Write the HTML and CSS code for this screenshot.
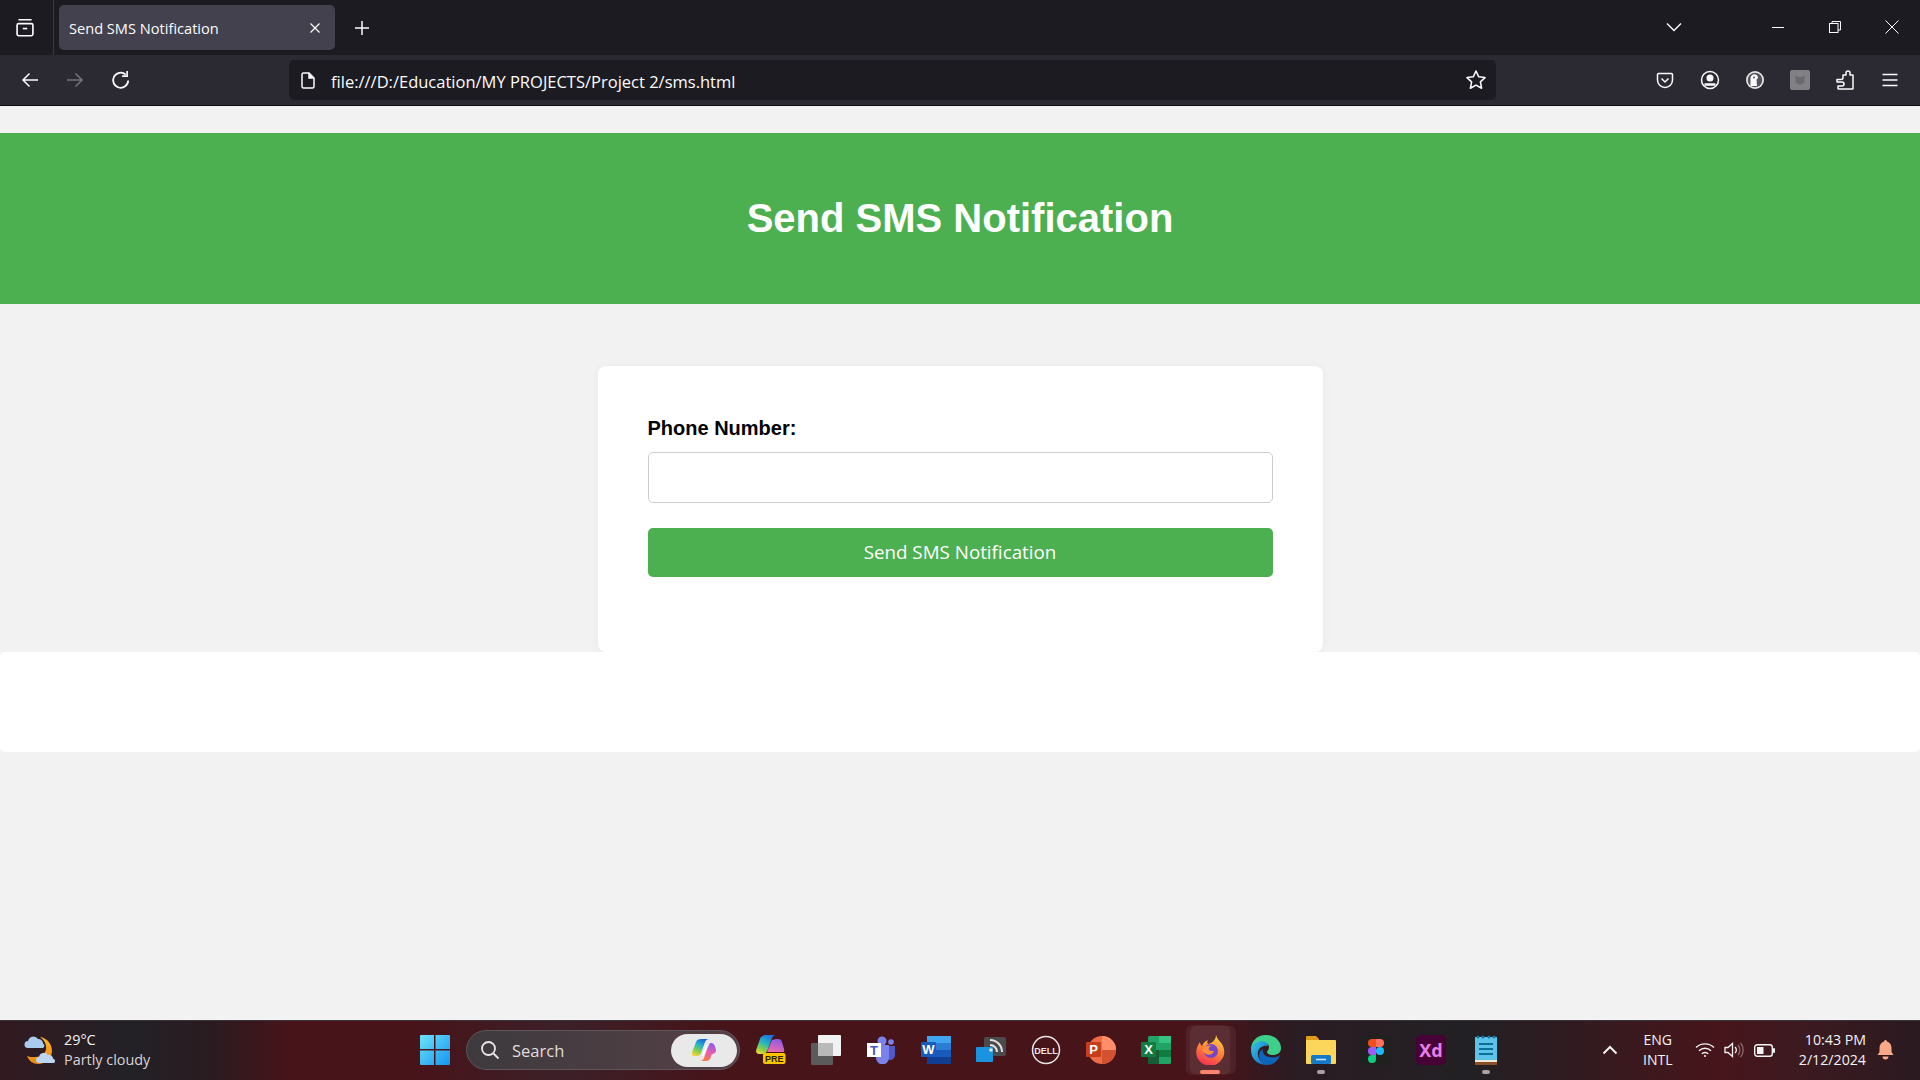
FILE: index.html
```html
<!doctype html>
<html>
<head>
  <title>Send SMS Notification</title>
  <link rel="stylesheet" href="styles.css">
</head>
<body>
  <div class="tabbar">
    <svg class="tab-list" width="22" height="22" viewBox="0 0 20 20" fill="none" stroke="#fbfbfe" stroke-width="1.5"><path d="M4 2.5h12M2.8 7.5A1.5 1.5 0 0 1 4.3 6h11.4a1.5 1.5 0 0 1 1.5 1.5v8a1.5 1.5 0 0 1-1.5 1.5H4.3a1.5 1.5 0 0 1-1.5-1.5z"/><path d="M8 10.5h4"/></svg>
    <div class="tab-sep"></div>
    <div class="tab">
      <span class="tab-title">Send SMS Notification</span>
      <svg width="12" height="12" viewBox="0 0 12 12" stroke="#fbfbfe" stroke-width="1.2"><path d="M1.5 1.5l9 9M10.5 1.5l-9 9"/></svg>
    </div>
    <svg class="new-tab" width="16" height="16" viewBox="0 0 16 16" stroke="#fbfbfe" stroke-width="1.5"><path d="M8 1v14M1 8h14"/></svg>
    <div class="tabbar-space"></div>
    <svg class="tab-menu" width="16" height="10" viewBox="0 0 16 10" fill="none" stroke="#fbfbfe" stroke-width="1.4"><path d="M1 1.5l7 7 7-7"/></svg>
    <div class="win-btn"><svg width="12" height="12" viewBox="0 0 12 12" stroke="#fbfbfe"><path d="M0 6.5h12"/></svg></div>
    <div class="win-btn"><svg width="12" height="12" viewBox="0 0 12 12" fill="none" stroke="#fbfbfe"><rect x="0.5" y="2.5" width="8.5" height="9"/><path d="M3 2.5V.5h8.5V9H9"/></svg></div>
    <div class="win-btn"><svg width="14" height="14" viewBox="0 0 14 14" stroke="#fbfbfe"><path d="M.5.5l13 13M13.5.5l-13 13"/></svg></div>
  </div>

  <div class="toolbar">
    <div class="nav-btns">
      <svg width="18" height="16" viewBox="0 0 18 16" fill="none" stroke="#fbfbfe" stroke-width="1.5"><path d="M17 8H2M8.5 1.5L2 8l6.5 6.5"/></svg>
      <svg width="18" height="16" viewBox="0 0 18 16" fill="none" stroke="#75747c" stroke-width="1.5"><path d="M1 8h15M9.5 1.5L16 8l-6.5 6.500"/></svg>
      <svg width="20" height="20" viewBox="0 0 18 18" fill="none" stroke="#fbfbfe" stroke-width="1.6"><path d="M15.5 9.5a6.800 6.800 0 1 1-2.300-5.400"/><path d="M14.500 1v4.500H10" stroke-width="1.5"/></svg>
    </div>
    <div class="urlbar">
      <svg width="14" height="17" viewBox="0 0 14 17" fill="none" stroke="#fbfbfe" stroke-width="1.5"><path d="M1 2.500A1.500 1.500 0 0 1 2.500 1h5.500L13 6v8.500a1.500 1.500 0 0 1-1.500 1.500h-9A1.500 1.500 0 0 1 1 14.500z"/><path d="M8 1v5h5" fill="#fbfbfe"/></svg>
      <span class="url">file:///D:/Education/MY PROJECTS/Project 2/sms.html</span>
      <svg width="22" height="22" viewBox="0 0 20 20" fill="none" stroke="#fbfbfe" stroke-width="1.4" stroke-linejoin="round"><path d="M10 1.800l2.500 5.300 5.700.7-4.200 3.900 1.100 5.800-5.100-2.900-5.100 2.900 1.100-5.800L1.800 7.800l5.700-.7z"/></svg>
    </div>
    <div class="tool-icons">
      <div class="tool-slot"><svg width="18" height="18" viewBox="0 0 18 18" fill="none" stroke="#fbfbfe" stroke-width="1.5"><path d="M2.500 2.500h13a1.500 1.500 0 0 1 1 1V9a7.500 7.500 0 0 1-15 0V3.500a1.500 1.500 0 0 1 1-1z"/><path d="M5.500 7.500L9 11l3.500-3.500"/></svg></div>
      <div class="tool-slot"><svg width="20" height="20" viewBox="0 0 20 20" fill="none" stroke="#fbfbfe" stroke-width="1.5"><circle cx="10" cy="10" r="8.500"/><circle cx="10" cy="8" r="2.800" fill="#fbfbfe"/><path d="M4.500 14.500h11" stroke-width="2.500"/></svg></div>
      <div class="tool-slot"><svg width="20" height="20" viewBox="0 0 20 20"><circle cx="10" cy="10" r="9" fill="#e8e8e8"/><circle cx="10" cy="10" r="7.300" fill="#55545c"/><path d="M5.500 16V8a4 4 0 0 1 5-3.500c2 .5 2.500 2 2.500 3.500l-1.500 1.500.5 6.500z" fill="#fbfbfe"/><circle cx="9" cy="7.500" r="1" fill="#55545c"/></svg></div>
      <div class="tool-slot"><svg width="20" height="20" viewBox="0 0 20 20"><rect width="20" height="20" rx="2" fill="#818085"/><path d="M5.500 5.500L10 7.500l4.500-2v7L10 15l-4.500-2.500z" fill="#6a696e"/></svg></div>
      <div class="tool-slot"><svg width="18" height="20" viewBox="0 0 18 20" fill="none" stroke="#fbfbfe" stroke-width="1.5" stroke-linejoin="round"><path d="M7 5h3V3a2 2 0 0 1 4 0v2h2.500a.5.5 0 0 1 .5.5v13a.5.5 0 0 1-.5.5h-14a.5.5 0 0 1-.5-.5V16h4a2 2 0 0 0 0-4H1V9.500h4a2 2 0 0 0 2-2z"/></svg></div>
      <div class="tool-slot"><svg width="16" height="14" viewBox="0 0 16 14" stroke="#fbfbfe" stroke-width="1.5"><path d="M.5 1.500h15M.5 7h15M.5 12.500h15"/></svg></div>
    </div>
  </div>

  <main class="page">
    <header class="page-head">
      <h1>Send SMS Notification</h1>
    </header>
    <form class="card">
      <label for="phone">Phone Number:</label>
      <input type="text" id="phone">
      <button type="button">Send SMS Notification</button>
    </form>
    <div class="strip"></div>
  </main>

  <footer class="taskbar">
    <div class="weather">
      <svg width="32" height="32" viewBox="0 0 32 32">
        <defs><linearGradient id="moon" x1="0" y1="0" x2="0" y2="1"><stop offset="0" stop-color="#fbb62e"/><stop offset="1" stop-color="#ee8612"/></linearGradient></defs>
        <path d="M16 3c7 1 12 7 12 14 0 7-6 13-14 13-5 0-9-3-11-8 2 1 5 1 8 1 8 0 12-5 11-11-.5-4-3-7-6-9z" fill="url(#moon)"/>
        <path d="M4 14a3.500 3.500 0 0 1 0-7 5.500 5.500 0 0 1 10-2 4.500 4.500 0 0 1 5 4.500 2.500 2.500 0 0 1 0 4.500z" fill="#a9cbee"/>
        <path d="M15 29a3 3 0 0 1 0-6 5 5 0 0 1 9-2 4 4 0 0 1 5 3.500 2.500 2.500 0 0 1 1 4.500z" fill="#bcd6f2"/>
      </svg>
      <div class="weather-text">
        <div>29°C</div>
        <div class="weather-sub">Partly cloudy</div>
      </div>
    </div>
    <div class="task-center">
      <svg class="start" width="30" height="30" viewBox="0 0 30 30">
        <defs><linearGradient id="win" x1="0" y1="0" x2="1" y2="1"><stop offset="0" stop-color="#6fe3fb"/><stop offset="1" stop-color="#1495ee"/></linearGradient></defs>
        <path d="M0 1a1 1 0 0 1 1-1h13v14H0zM15.500 0H29a1 1 0 0 1 1 1v13H15.500zM0 15.500h14V30H1a1 1 0 0 1-1-1zM15.500 15.500H30V29a1 1 0 0 1-1 1H15.500z" fill="url(#win)"/>
      </svg>
      <div class="search">
        <svg width="20" height="20" viewBox="0 0 20 20" fill="none" stroke="#e8e6e6" stroke-width="1.8"><circle cx="8.500" cy="8.500" r="6.500"/><path d="M13.500 13.500l5 5"/></svg>
        <span>Search</span>
        <div class="copilot-pill">
          <svg width="24" height="22" viewBox="0 0 24 22">
            <defs>
              <linearGradient id="cop-l" x1="0.700" y1="0" x2="0.200" y2="1"><stop offset="0" stop-color="#1a5fe0"/><stop offset="0.400" stop-color="#27b6c4"/><stop offset="0.700" stop-color="#7fd04a"/><stop offset="1" stop-color="#f5d33a"/></linearGradient>
              <linearGradient id="cop-r" x1="0.700" y1="0" x2="0.300" y2="1"><stop offset="0" stop-color="#8a5be8"/><stop offset="0.500" stop-color="#e85fb0"/><stop offset="1" stop-color="#f6803a"/></linearGradient>
            </defs>
            <path d="M9 0h8c-2 0-3 1-4 3l-4 11c-1 2-2 3-4 3H2C0 17-.500 15 .2 13L4 3c.7-2 2.500-3 5-3z" fill="url(#cop-l)"/>
            <path d="M18 4h1c2 0 3 1 3.800 3l1 3c.7 2.500-.8 5-3.800 5l-1.500 4c-.7 2-2 3-4.500 3H8c2 0 3-1 4-3l3.500-10z" fill="url(#cop-r)"/>
            <path d="M14 6h1.500l-4 11H10z" fill="#fff"/>
          </svg>
        </div>
      </div>
      <div class="task-icon">
        <svg width="30" height="30" viewBox="0 0 30 30">
          <defs>
            <linearGradient id="pre-l" x1="0.700" y1="0" x2="0.200" y2="1"><stop offset="0" stop-color="#1a6fe0"/><stop offset="0.450" stop-color="#27b6c4"/><stop offset="0.750" stop-color="#7fd04a"/><stop offset="1" stop-color="#f5d33a"/></linearGradient>
            <linearGradient id="pre-r" x1="0.700" y1="0" x2="0.300" y2="1"><stop offset="0" stop-color="#8a5be8"/><stop offset="1" stop-color="#f06aa8"/></linearGradient>
          </defs>
          <path d="M10 0h10c-2 0-3 1-4 3l-4 11c-1 3-3 5-5 5H3c-2.500 0-3.500-2-2.500-5L4 4c.7-2 3-4 6-4z" fill="url(#pre-l)"/>
          <path d="M20 4h2c2 0 3.500 1 4 3l2 7c.3 1 .3 2 0 3H11l5-12z" fill="url(#pre-r)"/>
          <rect x="7" y="18" width="22.500" height="11" rx="2" fill="#fbc504"/>
          <text x="18.200" y="27" class="pre-text">PRE</text>
        </svg>
      </div>
      <div class="task-icon">
        <svg width="30" height="30" viewBox="0 0 30 30">
          <rect x="0" y="8" width="22" height="22" rx="1" fill="#5c5b5b"/>
          <rect x="7" y="0" width="23" height="21" rx="1" fill="#f2f2f2"/>
          <rect x="7" y="8" width="15" height="13" fill="#b9b9b9"/>
        </svg>
      </div>
      <div class="task-icon">
        <svg width="28" height="28" viewBox="0 0 28 28">
          <circle cx="24" cy="6" r="2.800" fill="#7b83eb"/>
          <circle cx="15" cy="5" r="4.500" fill="#7b83eb"/>
          <path d="M19 10h9v9a5 5 0 0 1-8 4z" fill="#5059c9"/>
          <path d="M9 9h13v13a6.500 6.500 0 0 1-13 0z" fill="#7b83eb"/>
          <rect x="0" y="7" width="14" height="14" fill="#fff"/>
          <text x="7" y="18.500" class="app-letter teams-letter">T</text>
        </svg>
      </div>
      <div class="task-icon">
        <svg width="30" height="28" viewBox="0 0 30 28">
          <rect x="6" y="0" width="24" height="28" rx="1.500" fill="#2b7cd3"/>
          <rect x="6" y="0" width="24" height="7" fill="#41a5ee"/>
          <rect x="6" y="14" width="24" height="7" fill="#185abd"/>
          <rect x="6" y="21" width="24" height="7" fill="#103f91"/>
          <rect x="0" y="6" width="15" height="15" rx="1" fill="#185abd"/>
          <text x="7.500" y="18" class="app-letter">W</text>
        </svg>
      </div>
      <div class="task-icon">
        <svg width="30" height="26" viewBox="0 0 30 26" fill="none">
          <rect x="8" y="0" width="22" height="19" rx="2" fill="#4b4b4d"/>
          <path d="M14 3a12 12 0 0 1 12 12M14 8a7 7 0 0 1 7 7" stroke="#e4e4e4" stroke-width="2"/>
          <rect x="0" y="10" width="17" height="15" rx="1" fill="#1a94e0"/>
          <circle cx="15" cy="13" r="1.800" fill="#e4e4e4"/>
        </svg>
      </div>
      <div class="task-icon">
        <svg width="30" height="30" viewBox="0 0 30 30" fill="none">
          <circle cx="15" cy="15" r="13.500" stroke="#e8e6e6" stroke-width="1.500"/>
          <text x="15" y="18.500" class="dell-text">DELL</text>
        </svg>
      </div>
      <div class="task-icon">
        <svg width="30" height="28" viewBox="0 0 30 28">
          <circle cx="16" cy="14" r="14" fill="#ed6c47"/>
          <path d="M16 0a14 14 0 0 1 14 14H16z" fill="#ff8f6b"/>
          <path d="M16 14h14a14 14 0 0 1-14 14z" fill="#d35230"/>
          <rect x="0" y="6" width="15" height="15" rx="1" fill="#c43e1c"/>
          <text x="7.500" y="18" class="app-letter">P</text>
        </svg>
      </div>
      <div class="task-icon">
        <svg width="30" height="28" viewBox="0 0 30 28">
          <rect x="7" y="0" width="23" height="28" rx="1.500" fill="#21a366"/>
          <rect x="18" y="0" width="12" height="7" fill="#33c481"/>
          <rect x="7" y="14" width="11" height="14" fill="#185c37"/>
          <rect x="18" y="14" width="12" height="7" fill="#107c41"/>
          <rect x="0" y="6" width="15" height="15" rx="1" fill="#107c41"/>
          <text x="7.500" y="18" class="app-letter">X</text>
        </svg>
      </div>
      <div class="task-icon active">
        <svg width="30" height="30" viewBox="0 0 30 30">
          <defs><linearGradient id="ffx" x1="0.700" y1="0" x2="0.300" y2="1"><stop offset="0" stop-color="#ffcf3a"/><stop offset="0.500" stop-color="#ff7b2a"/><stop offset="1" stop-color="#f0234c"/></linearGradient></defs>
          <path d="M20 0c1 4 4 6 6 9 3 5 3 11 0 15a14 14 0 0 1-24 0C-1 19 0 12 4 7c0 2 1 3 2 4 1-3 3-5 6-6-1 2-1 3 0 4 4-1 8-4 8-9z" fill="url(#ffx)"/>
          <circle cx="15" cy="16" r="7" fill="#6e3bc4"/>
          <path d="M7 14c2-3 6-4 9-3-2 0-4 2-3 4 1 1 3 1 5 1-1 3-5 5-8 3-2-1-3-3-3-5z" fill="#ff8a2b"/>
        </svg>
        <div class="task-mark running"></div>
      </div>
      <div class="task-icon">
        <svg width="30" height="30" viewBox="0 0 30 30">
          <defs><linearGradient id="edge" x1="0" y1="0" x2="1" y2="1"><stop offset="0" stop-color="#36c5d9"/><stop offset="0.600" stop-color="#1b8fd6"/><stop offset="1" stop-color="#0a5eb5"/></linearGradient></defs>
          <path d="M15 0c9 0 15 6 15 13 0 5-4 7-8 7-3 0-6-1-6-3 0-1 2-2 2-5 0-3-3-5-7-5C6 7 1 11 0 15 0 6 6 0 15 0z" fill="#3ed08a"/>
          <path d="M0 15c0-5 5-9 11-9 4 0 6 3 6 5-4-1-9 1-10 6-1 6 3 11 9 13C7 30 0 24 0 15z" fill="url(#edge)"/>
          <path d="M29 20c-2 6-7 10-13 10-5-1-8-5-8-10 0-3 2-5 4-6-1 4 2 8 7 8 4 1 8 0 10-2z" fill="#0d66bb"/>
        </svg>
      </div>
      <div class="task-icon">
        <svg width="30" height="28" viewBox="0 0 30 28">
          <path d="M0 1a1 1 0 0 1 1-1h9l3 3v2H0z" fill="#e09b18"/>
          <rect x="0" y="4" width="30" height="24" rx="1" fill="#fcd65a"/>
          <rect x="5" y="19" width="20" height="9" rx="1.500" fill="#1579c9"/>
          <path d="M10 23.500h10" stroke="#cfe6f7" stroke-width="1.500"/>
        </svg>
        <div class="task-mark"></div>
      </div>
      <div class="task-icon">
        <svg width="30" height="30" viewBox="0 0 30 30">
          <rect x="0" y="0" width="30" height="30" rx="3" fill="#20201f"/>
          <path d="M11 4h4v8h-4a4 4 0 0 1 0-8z" fill="#f24e1e"/>
          <path d="M15 4h4a4 4 0 0 1 0 8h-4z" fill="#ff7262"/>
          <path d="M11 12h4v8h-4a4 4 0 0 1 0-8z" fill="#a259ff"/>
          <circle cx="19" cy="16" r="4" fill="#1abcfe"/>
          <path d="M11 20h4v4a4 4 0 1 1-4-4z" fill="#0acf83"/>
        </svg>
      </div>
      <div class="task-icon">
        <svg width="30" height="30" viewBox="0 0 30 30">
          <rect width="30" height="30" rx="5" fill="#470137"/>
          <text x="15" y="22" class="xd-text">Xd</text>
        </svg>
      </div>
      <div class="task-icon">
        <svg width="22" height="30" viewBox="0 0 22 30">
          <rect x="0" y="2" width="22" height="25" fill="#5cc4e8"/>
          <circle cx="3" cy="2" r="1.500" fill="#1679a5"/>
          <circle cx="8" cy="2" r="1.500" fill="#1679a5"/>
          <circle cx="14" cy="2" r="1.500" fill="#1679a5"/>
          <circle cx="19" cy="2" r="1.500" fill="#1679a5"/>
          <path d="M4 9h14M4 14h14M4 19h14" stroke="#0f6d97" stroke-width="2"/>
          <rect x="0" y="25" width="22" height="2" fill="#f1e9d8"/>
          <rect x="0" y="27" width="22" height="3" fill="#8a4f24"/>
        </svg>
        <div class="task-mark"></div>
      </div>
    </div>
    <div class="tray">
      <svg width="16" height="10" viewBox="0 0 16 10" fill="none" stroke="#f3f3f3" stroke-width="2"><path d="M1.500 8.500L8 2l6.500 6.500"/></svg>
      <div class="lang"><div>ENG</div><div>INTL</div></div>
      <div class="tray-icons">
        <svg width="20" height="16" viewBox="0 0 20 16" fill="none" stroke="#f3f3f3" stroke-width="1.400"><path d="M1 5.500a13 13 0 0 1 18 0M4 8.800a8.500 8.500 0 0 1 12 0M6.800 11.800a4.500 4.500 0 0 1 6.400 0"/><circle cx="10" cy="14" r="1" fill="#f3f3f3" stroke="none"/></svg>
        <svg width="20" height="16" viewBox="0 0 20 16" fill="none" stroke="#f3f3f3" stroke-width="1.300"><path d="M1 5.500h3L8.500 1.500v13L4 10.500H1z"/><path d="M11 5a4 4 0 0 1 0 6"/><path d="M14 3a7.500 7.500 0 0 1 0 10M16.500 1a10.500 10.500 0 0 1 0 14" stroke="#8d6a6e"/></svg>
        <svg width="21" height="13" viewBox="0 0 21 13"><rect x="0.700" y="0.700" width="17.600" height="11.600" rx="2.500" fill="none" stroke="#f3f3f3" stroke-width="1.400"/><rect x="3" y="3" width="6.500" height="7" fill="#f3f3f3"/><rect x="19" y="4" width="2" height="5" rx="1" fill="#f3f3f3"/></svg>
      </div>
      <div class="clock"><div>10:43 PM</div><div>2/12/2024</div></div>
      <svg width="17" height="20" viewBox="0 0 17 20" fill="#f9a98a"><path d="M8.500 0A1.500 1.500 0 0 1 10 1.500C13 2.300 14.500 5 14.500 8v4l2 3H.5l2-3V8C2.500 5 4 2.300 7 1.500A1.500 1.500 0 0 1 8.500 0zM5.500 16.500h6a3 3 0 0 1-6 0z"/></svg>
    </div>
  </footer>
</body>
</html>
```

FILE: styles.css
```css
* {
  box-sizing: border-box;
}

html, body {
  height: 100%;
}

body {
  margin: 0;
  display: flex;
  flex-direction: column;
  overflow: hidden;
  background-color: #f2f2f2;
  font-family: "Open Sans", "Noto Sans", sans-serif;
}

/* browser tabs */
.tabbar {
  height: 55px;
  display: flex;
  align-items: center;
  background-color: #1c1b22;
  color: #fbfbfe;
}

.tab-list {
  margin-left: 14px;
}

.tab-sep {
  width: 1px;
  height: 55px;
  margin-left: 17px;
  margin-right: 5px;
  background-color: #3a3940;
}

.tab {
  width: 276px;
  height: 45px;
  padding: 0 14px 0 10px;
  display: flex;
  align-items: center;
  justify-content: space-between;
  border-radius: 5px;
  background-color: #42414d;
}

.tab-title {
  padding-top: 1px;
  font-size: 14.6px;
}

.new-tab {
  margin-left: 19px;
}

.tabbar-space {
  flex: 1;
}

.tab-menu {
  margin-right: 67px;
  margin-bottom: 2px;
}

.win-btn {
  width: 57px;
  margin-bottom: 2px;
  display: flex;
  justify-content: center;
}

/* address bar */
.toolbar {
  height: 51px;
  display: flex;
  align-items: center;
  background-color: #2b2a33;
  border-bottom: 1px solid #0c0c0d;
}

.nav-btns {
  width: 289px;
  padding: 0 0 0 21px;
  display: flex;
  align-items: center;
  gap: 27px;
}

.urlbar {
  width: 1207px;
  height: 40px;
  padding: 0 9px 0 12px;
  display: flex;
  align-items: center;
  border-radius: 5px;
  background-color: #1c1b22;
  color: #fbfbfe;
}

.url {
  flex: 1;
  margin-left: 16px;
  padding-top: 2px;
  font-size: 16.5px;
}

.tool-icons {
  flex: 1;
  padding: 0 8px 0 0;
  display: flex;
  align-items: center;
  justify-content: flex-end;
}

.tool-slot {
  width: 45px;
  display: flex;
  justify-content: center;
}

/* the page itself */
.page {
  flex: 1;
  padding-top: 27px;
}

.page-head {
  height: 171px;
  display: flex;
  align-items: center;
  justify-content: center;
  background-color: #4caf50;
}

.page-head h1 {
  margin: 0;
  color: white;
  font-family: "Liberation Sans", Arial, sans-serif;
  font-size: 40px;
  font-weight: bold;
}

.card {
  width: 725px;
  height: 286px;
  margin: 62px auto 0;
  padding: 50px;
  border-radius: 8px;
  background-color: white;
  box-shadow: 0 0 10px rgba(0, 0, 0, 0.05);
}

.card label {
  display: block;
  height: 36px;
  color: black;
  font-family: "Liberation Sans", Arial, sans-serif;
  font-size: 20px;
  font-weight: bold;
  line-height: 24px;
}

.card input {
  display: block;
  width: 100%;
  height: 51px;
  border: 1px solid #ccc;
  border-radius: 5px;
  background-color: white;
}

.card button {
  display: block;
  width: 100%;
  height: 49px;
  margin-top: 25px;
  padding-bottom: 3px;
  border: 0;
  border-radius: 5px;
  background-color: #4caf50;
  color: white;
  font-family: "Open Sans", "Noto Sans", sans-serif;
  font-size: 18.8px;
}

.strip {
  position: relative;
  height: 100px;
  border-radius: 5px;
  background-color: white;
}

/* windows taskbar */
.taskbar {
  height: 60px;
  display: flex;
  align-items: center;
  color: #f3f3f3;
  box-shadow: inset 0 1px 0 #38323a;
  background: linear-gradient(90deg, #321a20 0, #222126 130px, #2a1b20 210px, #47141a 290px, #47141a 420px, #3c2028 560px, #47141a 720px, #47141a 1220px, #2a1c22 1290px, #222024 1470px, #47151b 1720px, #3c1a20 1800px, #2a1a20 1920px);
}

.weather {
  width: 410px;
  padding-left: 24px;
  display: flex;
  align-items: center;
  gap: 8px;
  font-size: 14.4px;
  line-height: 20px;
}

.weather-sub {
  color: #d9d4d5;
}

.task-center {
  display: flex;
  align-items: center;
}

.start {
  margin-left: 10px;
  margin-right: 16px;
}

.search {
  width: 274px;
  height: 40px;
  padding: 0 2px 0 13px;
  display: flex;
  align-items: center;
  gap: 12px;
  border-radius: 20px;
  border: 1px solid #5f555a;
  background: linear-gradient(90deg, #3d3a3e, #554046);
  color: #e0dcdc;
  font-size: 16.5px;
}

.search span {
  flex: 1;
}

.copilot-pill {
  width: 66px;
  height: 33px;
  display: flex;
  align-items: center;
  justify-content: center;
  border-radius: 17px;
  background-color: #e9e9ea;
}

.task-icon {
  position: relative;
  width: 55px;
  height: 50px;
  display: flex;
  align-items: center;
  justify-content: center;
}

.search + .task-icon {
  margin-left: 3px;
}

.task-icon svg {
  position: relative;
}

/* firefox has two windows open, so its tile is stacked */
.task-icon.active::before,
.task-icon.active::after {
  content: "";
  position: absolute;
  top: 0;
  bottom: 0;
  border-radius: 6px;
  background-color: rgba(255, 255, 255, 0.06);
}

.task-icon.active::before {
  left: 3px;
  width: 44px;
}

.task-icon.active::after {
  left: 7px;
  width: 46px;
  top: 1px;
  bottom: 1px;
}

.task-mark {
  position: absolute;
  left: 24px;
  bottom: 1px;
  width: 8px;
  height: 4px;
  border-radius: 2px;
  background-color: #a9a2a4;
}

.task-mark.running {
  left: 17px;
  width: 20px;
  z-index: 1;
  background-color: #f9866c;
}

.pre-text {
  fill: #2a1c00;
  font-family: "Liberation Sans", sans-serif;
  font-size: 9px;
  font-weight: bold;
  text-anchor: middle;
}

.app-letter {
  fill: white;
  font-family: "Liberation Sans", sans-serif;
  font-size: 13px;
  font-weight: bold;
  text-anchor: middle;
}

.teams-letter {
  fill: #4b53bc;
}

.dell-text {
  fill: #e8e6e6;
  font-family: "Liberation Sans", sans-serif;
  font-size: 9px;
  font-weight: bold;
  text-anchor: middle;
}

.xd-text {
  fill: #e97fec;
  font-family: "Noto Sans", sans-serif;
  font-size: 18px;
  font-weight: bold;
  text-anchor: middle;
}

.tray {
  flex: 1;
  padding-right: 26px;
  display: flex;
  align-items: center;
  justify-content: flex-end;
}

.lang {
  width: 42px;
  margin-left: 19px;
  text-align: center;
  font-size: 14px;
  line-height: 20px;
}

.tray-icons {
  margin-left: 16px;
  margin-right: 24px;
  display: flex;
  align-items: center;
  gap: 9.5px;
}

.clock {
  margin-right: 11px;
  text-align: right;
  font-size: 14.2px;
  line-height: 20px;
}
```
